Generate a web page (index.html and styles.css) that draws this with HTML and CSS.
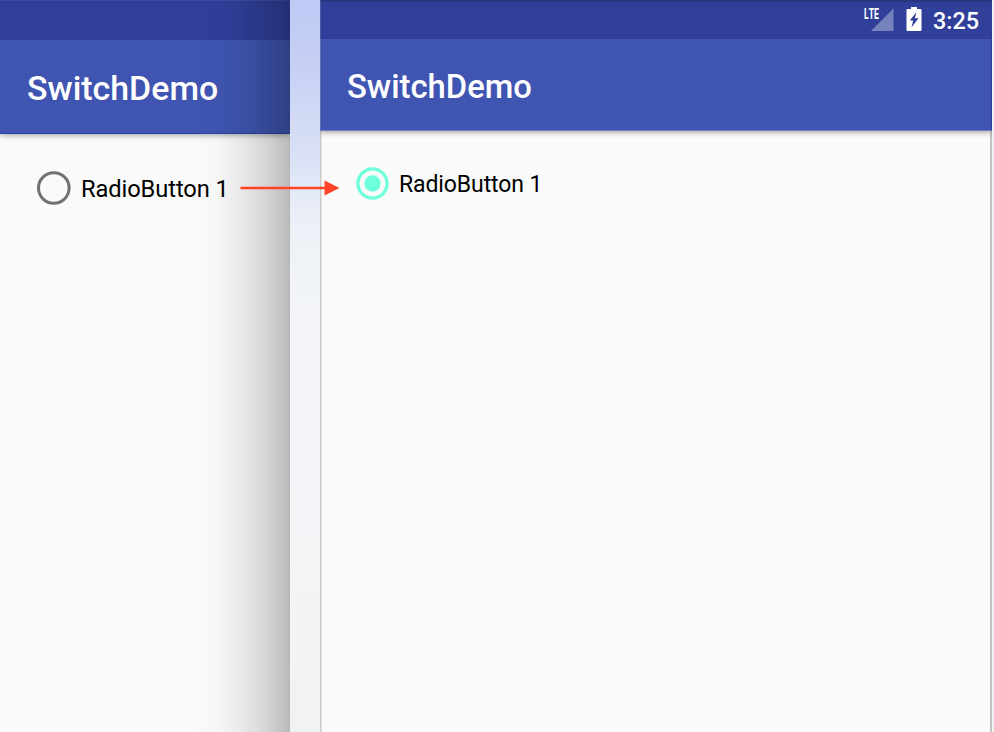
FILE: index.html
```html
<!DOCTYPE html>
<html lang="en">
<head>
<meta charset="utf-8">
<title>SwitchDemo</title>
<link rel="stylesheet" href="styles.css">
</head>
<body>
<main class="stage">
  <section class="phone phone-before">
    <div class="status-bar"></div>
    <header class="app-bar"><h1>SwitchDemo</h1></header>
    <div class="content">
      <div class="radio-row">
        <svg class="radio" viewBox="0 0 34 34"><circle cx="16.800" cy="17" r="15.3" fill="none" stroke="#717171" stroke-width="3"/></svg>
        <span>RadioButton 1</span>
      </div>
    </div>
    <div class="edge-shade"></div>
  </section>
  <div class="gap"></div>
  <section class="phone phone-after">
    <div class="status-bar">
      <svg class="signal" viewBox="0 0 30 26"><path d="M29.500 2.500v22.500H7z" fill="#7682bd"/><text class="lte" transform="translate(0 12.500) scale(.6 1)">LTE</text></svg>
      <svg class="battery" viewBox="0 0 16 24"><path d="M1.500 2H5V0h6v2h3.500q1 0 1 1v20q0 1-1 1h-13q-1 0-1-1V3q0-1 1-1z" fill="#fff"/><path d="M10.500 5 3.800 13.500h3.400l-1.700 7 7-9.300H8.800z" fill="#303f9a"/></svg>
      <span class="clock">3:25</span>
    </div>
    <header class="app-bar"><h1>SwitchDemo</h1></header>
    <div class="content">
      <div class="radio-row">
        <svg class="radio" viewBox="0 0 34 34"><circle cx="17" cy="17" r="15" fill="none" stroke="#6effdc" stroke-width="3.400"/><circle cx="17" cy="17" r="8.500" fill="#6effdc"/></svg>
        <span>RadioButton 1</span>
      </div>
    </div>
  </section>
  <div class="outside"></div>
  <svg class="arrow" viewBox="0 0 100 16"><path d="M0.500 8H86" stroke="#ff4326" stroke-width="2.700"/><path d="M84.500 0.500v15L99.500 8z" fill="#ff4326"/></svg>
</main>
</body>
</html>
```
FILE: styles.css
```css
* { box-sizing: border-box; }
body { margin: 0; font-family: Roboto, "Liberation Sans", sans-serif; }
.stage {
  position: relative;
  display: grid;
  grid-template-columns: 290px 30px 672px 2px;
  height: 732px;
  overflow: hidden;
}
.phone {
  position: relative;
  display: flex;
  flex-direction: column;
  background: #fafafa;
  overflow: hidden;
}
.status-bar {
  position: relative;
  z-index: 1;
  display: flex;
  align-items: flex-start;
  justify-content: flex-end;
  height: 39px;
  flex: none;
  background: #303f9a;
  box-shadow: inset 0 2px 0 #27347f;
  color: #fff;
}
.phone-before .status-bar { height: 40px; box-shadow: inset 0 1px 0 #3e4d9e; }
.app-bar {
  display: flex;
  align-items: center;
  height: 92px;
  flex: none;
  padding: 5px 0 0 26px;
  background: #3f55b1;
  color: #fff;
  border-bottom: 1px solid #7380bd;
  box-shadow: 0 1px 6px rgba(0, 0, 0, .38);
}
.phone-before .app-bar { height: 94px; padding: 5px 0 0 27px; border-color: #2445a8; }
h1 { margin: 0; font-size: 32.800px; font-weight: 500; line-height: 40px; white-space: nowrap; }
.phone-before h1 { font-size: 33.900px; }
.content { padding: 36px 0 0 36px; }
.phone-before .content { padding: 37px 0 0 37px; }
.radio-row { display: flex; align-items: flex-start; font-size: 23px; line-height: 34px; letter-spacing: -.1px; color: #000; white-space: nowrap; }
.phone-before .radio-row { font-size: 23.700px; }
.radio-row span { padding-top: 1px; }
.radio { width: 33px; height: 33px; margin-right: 10px; flex: none; }
.phone-before .radio { width: 34px; height: 34px; }
.edge-shade {
  position: absolute;
  z-index: 2;
  inset: 0;
  border-right: 1px solid rgba(0, 0, 0, .28);
  background: linear-gradient(90deg, transparent 66%, rgba(0, 0, 0, .012) 74%, rgba(0, 0, 0, .07) 84%, rgba(0, 0, 0, .15) 92%, rgba(0, 0, 0, .25) 100%);
}
.gap { background: linear-gradient(#bfcaf5 0, #c5cff4 60px, #dce3f6 165px, #e9eef8 210px, #eff2f6 250px, #f2f4f8 310px, #f2f4f6 560px, #f0f2f4 100%); }
.phone-after { box-shadow: inset 1px 0 #c9c9c9, inset 2px 0 #e3e3e3, inset -2px 0 #c2c2c2; }
.phone-after .status-bar, .phone-after .app-bar { border-left: 1px solid #6472b7; border-right: 1px solid #303e91; }
.phone-after .status-bar { border-left-color: #4a589f; }
.signal { width: 30px; height: 26px; margin-top: 6px; }
.lte { font: 700 14.500px Roboto, sans-serif; font-kerning: none; fill: #fff; }
.battery { width: 16px; height: 24px; margin: 7px 0 0 12px; }
.clock { margin: 6px 12px 0 11px; font-size: 23.400px; font-weight: 500; line-height: 30px; }
.outside { background: #f1f1f3; }
.arrow { position: absolute; z-index: 3; left: 240px; top: 180px; width: 100px; height: 16px; }
```
